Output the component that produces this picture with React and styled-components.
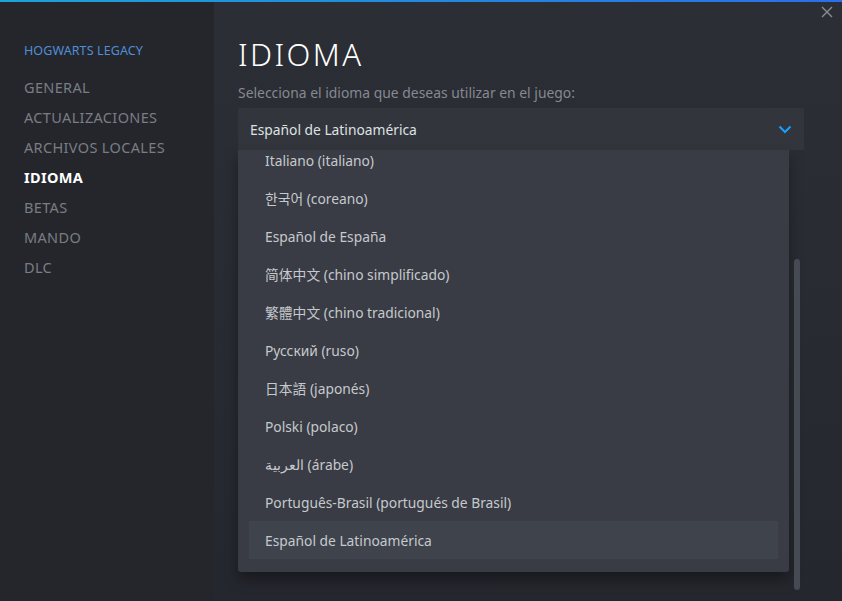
import React from "react";
import styled, { createGlobalStyle } from "styled-components";

const Global = createGlobalStyle`
  html, body { margin: 0; padding: 0; background: #23252b; }
  body { font-family: "Noto Sans", "Noto Sans CJK SC", sans-serif; }
  * { box-sizing: border-box; }
`;

const Window = styled.div`
  position: relative;
  width: 842px;
  height: 601px;
  display: flex;
  overflow: hidden;
  border-top: 2px solid #1c9ad6;
  border-image: linear-gradient(90deg, #1ba3d6, #2a6fe8) 1;
  border-left: 0; border-right: 0; border-bottom: 0;
`;

const Sidebar = styled.nav`
  width: 214px;
  flex-shrink: 0;
  background: #24262c;
  padding: 41px 0 0 24px;
  display: flex;
  flex-direction: column;
`;

const GameTitle = styled.div`
  color: #4e8fd8;
  font-size: 12.5px;
  letter-spacing: 0.1px;
  text-transform: uppercase;
  line-height: 16px;
  margin-bottom: 13px;
`;

const NavItem = styled.div`
  color: ${(p) => (p.$active ? "#ffffff" : "#7a7d84")};
  font-weight: ${(p) => (p.$active ? 700 : 400)};
  font-size: 14.5px;
  line-height: 30px;
  letter-spacing: 0.35px;
`;

const Main = styled.main`
  flex: 1;
  position: relative;
  background: linear-gradient(180deg, #2b2e35 0%, #292c33 40%, #25272e 100%);
  padding: 30px 38px 0 24px;
  display: flex;
  flex-direction: column;
`;

const Heading = styled.h1`
  margin: 0;
  color: #ffffff;
  font-weight: 300;
  font-size: 31px;
  letter-spacing: 2.4px;
  line-height: 44px;
`;

const Subtitle = styled.p`
  margin: 7px 0 0;
  color: #868991;
  font-size: 13.9px;
  line-height: 20px;
`;

const SelectWrap = styled.div`
  position: relative;
  margin-top: 5px;
`;

const SelectButton = styled.div`
  height: 42px;
  background: #32353c;
  border-radius: 2px;
  display: flex;
  align-items: center;
  justify-content: space-between;
  padding: 0 12px 0 12px;
  color: #dfe1e3;
  font-size: 13.8px;
`;

const Chevron = styled.svg`
  width: 14px;
  height: 9px;
`;

const List = styled.div`
  position: absolute;
  top: 42px;
  left: 0;
  width: 551px;
  height: 422px;
  background: #393c44;
  border-radius: 0 0 3px 3px;
  box-shadow: 0 8px 14px rgba(0, 0, 0, 0.35);
  overflow: hidden;
`;

const ListInner = styled.div`
  position: absolute;
  left: 11px;
  right: 11px;
  bottom: 13px;
  display: flex;
  flex-direction: column;
`;

const Option = styled.div`
  height: 38px;
  display: flex;
  align-items: center;
  padding-left: 16px;
  color: #c6c9cd;
  font-size: 13.8px;
  background: ${(p) => (p.$selected ? "#3e434c" : "transparent")};
`;

const Scrollbar = styled.div`
  position: absolute;
  left: 556px;
  top: 151px;
  width: 6px;
  height: 331px;
  border-radius: 3px;
  background: #464a53;
`;

const Close = styled.svg`
  position: absolute;
  top: 4px;
  right: 9px;
  width: 12px;
  height: 12px;
`;

const nav = ["GENERAL", "ACTUALIZACIONES", "ARCHIVOS LOCALES", "IDIOMA", "BETAS", "MANDO", "DLC"];

const options = [
  "Italiano (italiano)",
  "한국어 (coreano)",
  "Español de España",
  "简体中文 (chino simplificado)",
  "繁體中文 (chino tradicional)",
  "Русский (ruso)",
  "日本語 (japonés)",
  "Polski (polaco)",
  "العربية (árabe)",
  "Português-Brasil (portugués de Brasil)",
  "Español de Latinoamérica",
];

export default function App() {
  return (
    <>
      <Global />
      <Window>
        <Sidebar>
          <GameTitle>Hogwarts Legacy</GameTitle>
          {nav.map((n) => (
            <NavItem key={n} $active={n === "IDIOMA"}>
              {n}
            </NavItem>
          ))}
        </Sidebar>
        <Main>
          <Close viewBox="0 0 12 12">
            <path d="M1 1L11 11M11 1L1 11" stroke="#8a8d93" strokeWidth="1.4" fill="none" />
          </Close>
          <Heading>IDIOMA</Heading>
          <Subtitle>Selecciona el idioma que deseas utilizar en el juego:</Subtitle>
          <SelectWrap>
            <SelectButton>
              <span>Español de Latinoamérica</span>
              <Chevron viewBox="0 0 14 9">
                <path d="M1.5 1.5L7 7L12.5 1.5" stroke="#1a9fff" strokeWidth="2" fill="none" />
              </Chevron>
            </SelectButton>
            <List>
              <ListInner>
                {options.map((o, i) => (
                  <Option key={o} $selected={i === options.length - 1}>
                    <span dir="ltr">{o}</span>
                  </Option>
                ))}
              </ListInner>
            </List>
            <Scrollbar />
          </SelectWrap>
        </Main>
      </Window>
    </>
  );
}
